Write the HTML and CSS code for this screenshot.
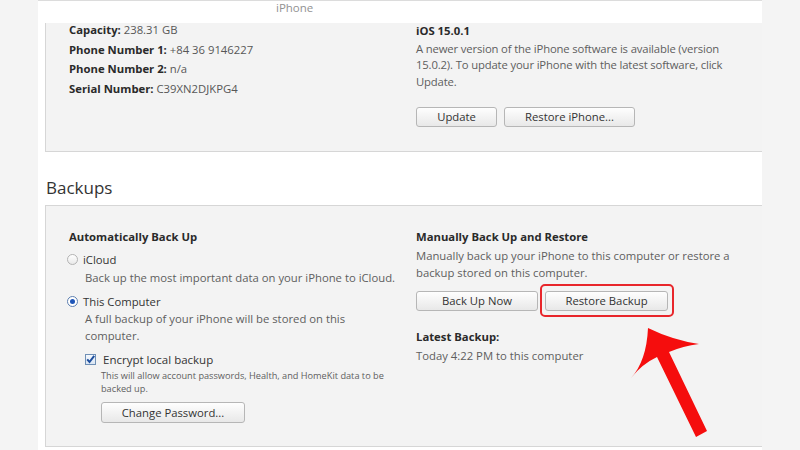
FILE: index.html
```html
<!DOCTYPE html>
<html>
<head>
<meta charset="utf-8">
<link rel="stylesheet" href="styles.css">
</head>
<body>
<div class="window">
  <aside class="gutter"></aside>
  <main class="main">
    <header class="titlebar">iPhone</header>
    <section class="panel summary">
      <div class="info">
        <div class="row"><b>Capacity:</b> 238.31 GB</div>
        <div class="row"><b>Phone Number 1:</b> +84 36 9146227</div>
        <div class="row"><b>Phone Number 2:</b> n/a</div>
        <div class="row"><b>Serial Number:</b> C39XN2DJKPG4</div>
      </div>
      <div class="ios">
        <div class="head">iOS 15.0.1</div>
        <p class="desc first">A newer version of the iPhone software is available (version<br>15.0.2). To update your iPhone with the latest software, click<br>Update.</p>
        <div class="buttons top-buttons">
          <button class="btn w-update">Update</button>
          <button class="btn w-restore-iphone">Restore iPhone...</button>
        </div>
      </div>
    </section>
    <h2 class="section-title">Backups</h2>
    <section class="panel backups">
      <div class="auto">
        <div class="head">Automatically Back Up</div>
        <label class="option opt-icloud"><span class="radio"></span>iCloud</label>
        <p class="desc sub tight">Back up the most important data on your iPhone to iCloud.</p>
        <label class="option opt-computer"><span class="radio on"></span>This Computer</label>
        <p class="desc sub full">A full backup of your iPhone will be stored on this<br>computer.</p>
        <label class="option encrypt"><span class="checkbox"><svg viewBox="0 0 11 11" width="11" height="11"><path d="M2.2 5.4 L4.5 8 L9.2 1.8" fill="none" stroke="#1e4f9e" stroke-width="2"/></svg></span>Encrypt local backup</label>
        <p class="small">This will allow account passwords, Health, and HomeKit data to be<br>backed up.</p>
        <button class="btn w-change">Change Password...</button>
      </div>
      <div class="manual">
        <div class="head">Manually Back Up and Restore</div>
        <p class="desc first-m">Manually back up your iPhone to this computer or restore a<br>backup stored on this computer.</p>
        <div class="buttons backup-buttons">
          <button class="btn w-backup">Back Up Now</button>
          <button class="btn w-restore highlighted">Restore Backup</button>
        </div>
        <div class="head latest">Latest Backup:</div>
        <p class="desc today">Today 4:22 PM to this computer</p>
      </div>
    </section>
  </main>
  <aside class="gutter"></aside>
  <svg class="arrow" viewBox="0 0 120 130" width="120" height="130">
    <path d="M48 8 Q72.5 20 99 24 Q83 26 69 32 L107 111 L96 117 L57 37 Q42 44 31 58 Q46.5 41 48 8 Z" fill="#f50d0d"/>
  </svg>
</div>
</body>
</html>
```

FILE: styles.css
```css
* { box-sizing: border-box; }
html, body { margin: 0; padding: 0; }
body {
  width: 800px;
  height: 450px;
  overflow: hidden;
  font-family: "Open Sans", "Noto Sans", sans-serif;
  font-size: 11.3px;
  color: #5e5e5e;
  background: #f4f4f4;
}
.window {
  position: relative;
  display: flex;
  height: 450px;
}
.gutter {
  width: 38px;
  flex: none;
  background: #f4f4f4;
}
.main {
  width: 724px;
  flex: none;
  background: #fff;
}
.titlebar {
  height: 23px;
  border-top: 1px solid #dcdcdc;
  padding-left: 238px;
  line-height: 13px;
  color: #929292;
  font-size: 11.5px;
}
.panel {
  margin-left: 7px;
  background: #f3f3f3;
  border-left: 1px solid #d6d6d6;
  border-bottom: 1px solid #d6d6d6;
  display: grid;
  grid-template-columns: 347px 1fr;
  padding-left: 23px;
}
.summary {
  height: 129px;
}
.info { margin-top: -3px; }
.row {
  line-height: 19.5px;
  color: #575757;
}
.row b { color: #2a2a2a; font-weight: 700; }
.head {
  font-weight: 700;
  color: #2a2a2a;
  line-height: 17px;
}
.ios { margin-top: -1.5px; }
.desc {
  margin: 0;
  line-height: 16.5px;
  color: #5e5e5e;
  white-space: nowrap;
}
.desc.first { margin-top: 2px; letter-spacing: -0.15px; }
.buttons { display: flex; gap: 7px; }
.top-buttons { margin-top: 16.5px; }
.btn {
  height: 20px;
  padding: 0;
  font-family: inherit;
  font-size: 11.3px;
  color: #333;
  background: linear-gradient(#fefefe, #e8e8e8);
  border: 1px solid #b6b6b6;
  border-radius: 3px;
  line-height: 18px;
  position: relative;
}
.w-update { width: 81px; }
.w-restore-iphone { width: 131px; }
.w-backup { width: 122px; }
.w-restore { width: 123px; }
.w-change { width: 144px; height: 21px; margin-left: 32px; margin-top: 7px; display: block; }
.highlighted::after {
  content: "";
  position: absolute;
  left: -6px;
  right: -7px;
  top: -8px;
  bottom: -7px;
  border: 2px solid #e8262b;
  border-radius: 5px;
}
.section-title {
  margin: 24px 0 5px 8px;
  font-size: 17px;
  font-weight: 400;
  line-height: 24px;
  color: #333;
}
.backups {
  border-top: 1px solid #d6d6d6;
  height: 242px;
  padding-top: 22px;
}
.option {
  display: flex;
  align-items: center;
  line-height: 17px;
  color: #333;
  margin-left: -2px;
}
.opt-icloud { margin-top: 6px; }
.opt-computer { margin-top: 7.5px; }
.radio {
  width: 11px;
  height: 11px;
  border-radius: 50%;
  border: 1px solid #b3b3b3;
  background: linear-gradient(#fff, #e9e9e9);
  margin-right: 5px;
  position: relative;
  flex: none;
}
.radio.on {
  border-color: #5d7fb0;
  background: #fff;
}
.radio.on::after {
  content: "";
  position: absolute;
  left: 2px; top: 2px;
  width: 5px; height: 5px;
  border-radius: 50%;
  background: #1f56b8;
}
.desc.sub { margin-left: 16px; }
.desc.tight { margin-top: 0.5px; line-height: 17px; }
.desc.full { margin-top: 1.25px; }
.encrypt { margin-left: 16px; margin-top: 6.5px; font-size: 11.5px; }
.checkbox {
  width: 11px;
  height: 11px;
  border: 1px solid #6f8fb5;
  background: linear-gradient(#f4f8fd, #dbe6f3);
  margin-right: 7px;
  flex: none;
  display: flex;
}
.checkbox svg { margin: -1px; }
.small {
  margin: 1.5px 0 0 32px;
  font-size: 9.2px;
  line-height: 13px;
  color: #5e5e5e;
}
.desc.first-m { margin-top: 3.25px; }
.backup-buttons { margin-top: 10px; }
.latest { margin-top: 16.5px; }
.desc.today { margin-top: 2px; line-height: 17px; }
.arrow {
  position: absolute;
  left: 600px;
  top: 320px;
}
```
